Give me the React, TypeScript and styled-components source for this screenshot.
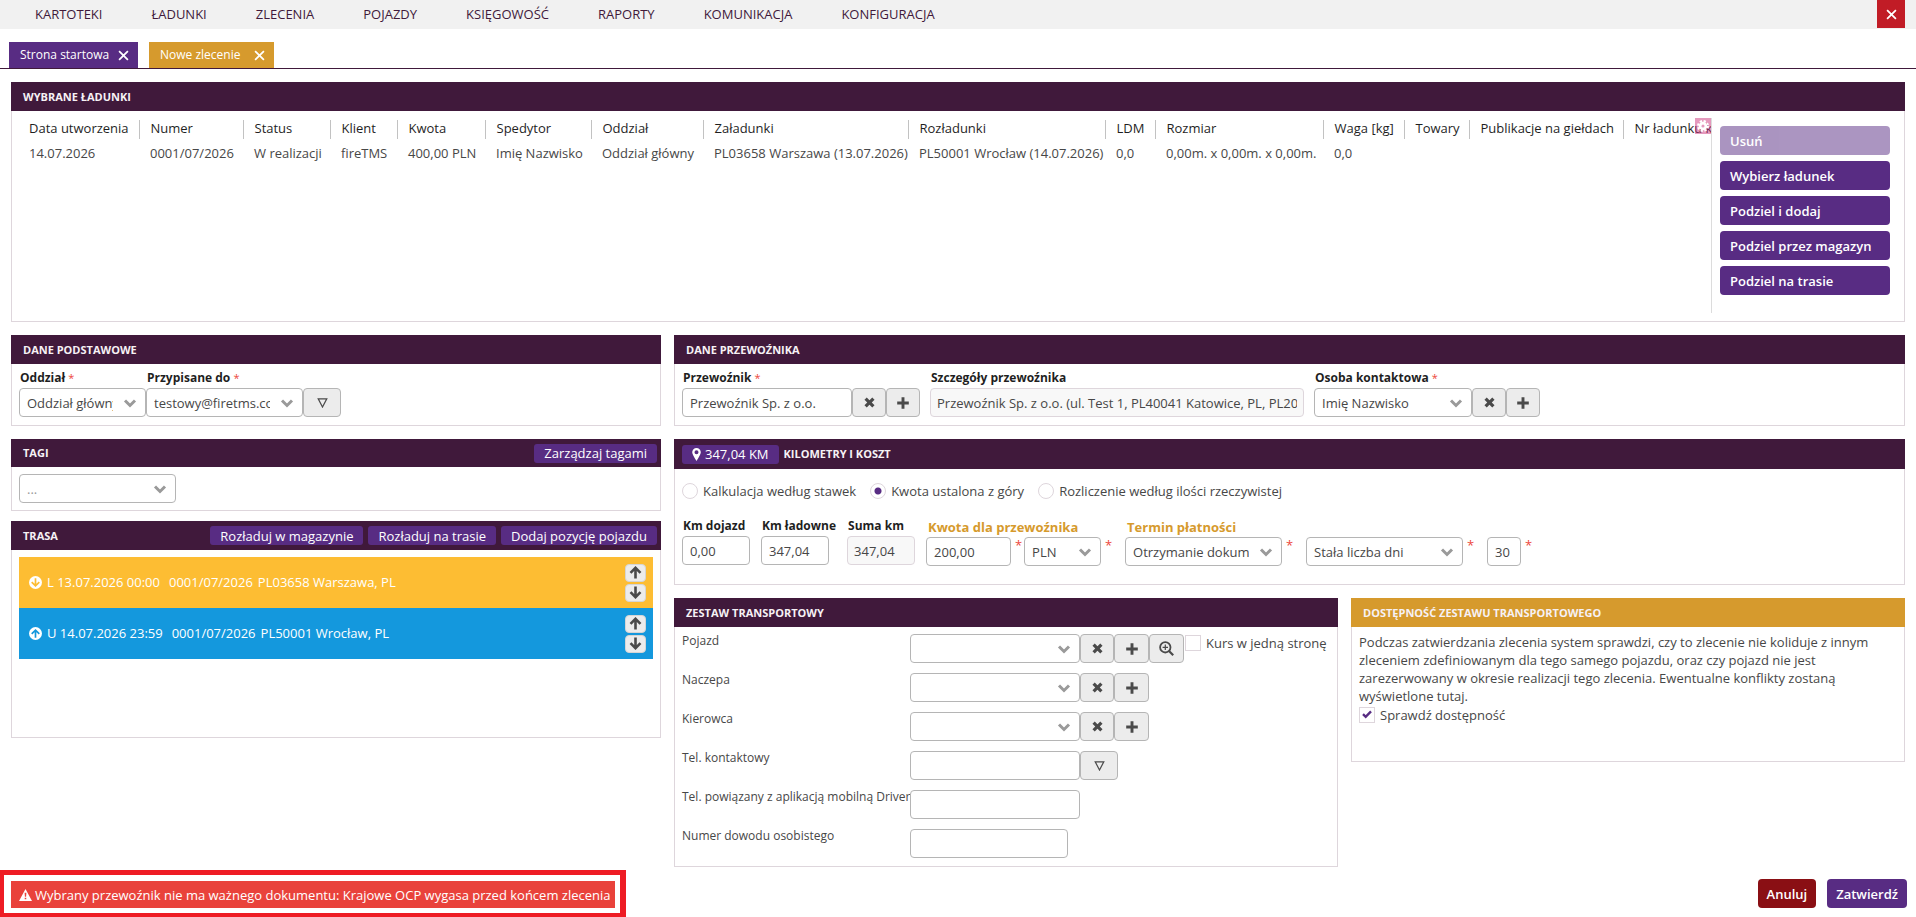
import React, { useId } from "react";
import styled, { createGlobalStyle, css } from "styled-components";

const color = {
  plum: "#40193b",
  violet: "#582c83",
  gold: "#d69a2d",
  line: "#ded6dc",
  inputLine: "#b5b5b5",
  text: "#474747",
  dark: "#1f1f1f",
  required: "#ed473b",
};

const GlobalStyle = createGlobalStyle`
  *, *::before, *::after { box-sizing: border-box; }
  body { margin: 0; background: #fff; }
  body, button, input, select {
    font-family: "Open Sans", "Noto Sans", sans-serif;
    font-size: 13px;
    line-height: 18px;
    color: ${color.text};
  }
  button { cursor: pointer; }
`;

/* ---------- top bars ---------- */

const Nav = styled.nav`
  display: flex;
  justify-content: space-between;
  height: 29px;
  padding: 0 11px 0 10px;
  background: #f1f1f1;
`;

const NavLinks = styled.div`
  display: flex;
`;

const NavLink = styled.a`
  padding: 0 24px 0 25px;
  line-height: 29px;
  color: ${color.plum};
  text-decoration: none;
`;

const CloseButton = styled.button`
  display: flex;
  align-items: center;
  justify-content: center;
  width: 28px;
  height: 28px;
  padding: 0;
  border: 0;
  background: #c11c26;
`;

const Tabs = styled.div`
  display: flex;
  gap: 11px;
  margin-top: 13px;
  padding: 0 9px;
  border-bottom: 1px solid ${color.plum};
`;

const Tab = styled.div<{ $width: number; $active?: boolean }>`
  display: flex;
  align-items: center;
  justify-content: space-between;
  width: ${(p) => p.$width}px;
  height: 26px;
  padding: 0 9px 0 11px;
  background: ${(p) => (p.$active ? color.gold : color.violet)};
  color: #fff;
  font-size: 12px;
  white-space: nowrap;
`;

const TabClose = styled.button`
  display: flex;
  padding: 0;
  border: 0;
  background: none;
`;

/* ---------- panels ---------- */

const Page = styled.main`
  padding: 13px 11px 0;
`;

const Panel = styled.section`
  display: flex;
  flex-direction: column;
  min-width: 0;
`;

const PanelHeader = styled.header<{ $gold?: boolean; $height?: number }>`
  display: flex;
  align-items: center;
  gap: 5px;
  height: ${(p) => p.$height ?? 29}px;
  padding: 0 4px 0 12px;
  background: ${(p) => (p.$gold ? color.gold : color.plum)};
`;

const PanelTitle = styled.h2`
  flex: 1;
  margin: 0;
  color: #f6f1f5;
  font-size: 11px;
  line-height: 16px;
  font-weight: 700;
`;

const PanelBody = styled.div<{ $minHeight?: number; $pad?: string }>`
  min-height: ${(p) => p.$minHeight ?? 0}px;
  padding: ${(p) => p.$pad ?? "4px 7px 8px"};
  border: 1px solid ${color.line};
  border-top: 0;
`;

const SmallButton = styled.button`
  height: 19px;
  padding: 0 10px;
  border: 0;
  border-radius: 3px;
  background: ${color.violet};
  color: #fff;
  line-height: 18px;
`;

const DistanceBadge = styled(SmallButton)`
  display: flex;
  align-items: center;
  gap: 4px;
`;

const Button = styled.button<{ $danger?: boolean; $pad?: number }>`
  height: 29px;
  padding: 0 ${(p) => p.$pad ?? 10}px;
  border: 0;
  border-radius: 4px;
  background: ${(p) => (p.$danger ? "#8a0f14" : color.violet)};
  color: #fff;
  font-weight: 600;
  text-align: left;

  &:disabled {
    opacity: 0.5;
  }
`;

/* ---------- loads table ---------- */

const LoadsBody = styled.div`
  display: flex;
  gap: 8px;
  height: 211px;
  padding: 7px 14px 8px 6px;
  border: 1px solid ${color.line};
  border-top: 0;
`;

const TableArea = styled.div`
  position: relative;
  flex: 1;
  min-width: 0;
  overflow: hidden;
  border-right: 1px solid #dcdcdc;
`;

const Table = styled.table`
  width: 1710px;
  margin-top: 2px;
  border-collapse: collapse;
  table-layout: fixed;
`;

const HeadCell = styled.th<{ $last?: boolean }>`
  height: 19px;
  padding: 0 0 2px 11px;
  border-right: ${(p) => (p.$last ? "0" : "1px solid #c2c2c2")};
  color: ${color.dark};
  font-weight: 400;
  line-height: 17px;
  text-align: left;
  white-space: nowrap;
`;

const Cell = styled.td`
  height: 29px;
  padding: 0 0 2px 11px;
  white-space: nowrap;
`;

const GearButton = styled.button`
  position: absolute;
  top: 0;
  right: 0;
  display: flex;
  align-items: center;
  justify-content: center;
  width: 16px;
  height: 16px;
  padding: 0;
  border: 0;
  background: rgba(204, 51, 123, 0.5);
`;

const SideButtons = styled.div`
  display: flex;
  flex-direction: column;
  gap: 6px;
  width: 170px;
  padding-top: 8px;
`;

/* ---------- page grid ---------- */

const Columns = styled.div`
  display: grid;
  grid-template-columns: 650fr 1231fr;
  gap: 13px;
  align-items: start;
  margin-top: 13px;
`;

const Column = styled.div<{ $gap: number }>`
  display: flex;
  flex-direction: column;
  gap: ${(p) => p.$gap}px;
  min-width: 0;
`;

const SplitRow = styled.div`
  display: grid;
  grid-template-columns: 664fr 554fr;
  gap: 13px;
  align-items: start;
`;

/* ---------- form parts ---------- */

const FieldRow = styled.div<{ $gap?: number }>`
  display: flex;
  align-items: flex-start;
  gap: ${(p) => p.$gap ?? 0}px;
`;

const Field = styled.div`
  display: flex;
  flex-direction: column;
`;

const FieldLabel = styled.label<{ $gold?: boolean }>`
  margin-bottom: 1px;
  padding: ${(p) => (p.$gold ? "2px 0 0 2px" : "1px 0 0 1px")};
  color: ${(p) => (p.$gold ? color.gold : color.dark)};
  font-size: ${(p) => (p.$gold ? 13 : 12)}px;
  font-weight: 700;
  white-space: nowrap;
`;

const Star = styled.span`
  color: ${color.required};
  font-size: 11px;
  font-weight: 400;
`;

const StarColumn = styled.span`
  width: 13px;
  padding-left: 4px;
  color: ${color.required};
  line-height: 16px;
`;

const control = css<{ $width: number }>`
  width: ${(p) => p.$width}px;
  height: 29px;
  margin: 0;
  border: 1px solid ${color.inputLine};
  border-radius: 4px;
  background: #fff;
  color: ${color.text};
  outline: 0;
`;

const Input = styled.input<{ $width: number }>`
  ${control}
  padding: 0 7px;

  &:read-only {
    padding: 0 6px;
    border-color: ${color.line};
    background: #f8f8f8;
  }
`;

const SelectWrap = styled.span`
  position: relative;
  display: flex;
  width: fit-content;
`;

const NativeSelect = styled.select<{ $width: number; $muted?: boolean }>`
  ${control}
  padding: 0 32px 0 7px;
  appearance: none;
  ${(p) => p.$muted && "color: #9a9a9a;"}
`;

const ChevronSvg = styled.svg`
  position: absolute;
  top: 10px;
  right: 9px;
  pointer-events: none;
`;

const IconButton = styled.button<{ $width?: number }>`
  display: flex;
  align-items: center;
  justify-content: center;
  width: ${(p) => p.$width ?? 34}px;
  height: 29px;
  padding: 0;
  border: 1px solid ${color.inputLine};
  border-radius: 4px;
  background: #ececec;
`;

function Chevron() {
  return (
    <ChevronSvg width="14" height="11" viewBox="0 0 14 11">
      <path d="M2 2.5 L7 7.5 L12 2.5" fill="none" stroke="#9a9a9a" strokeWidth="3" />
    </ChevronSvg>
  );
}

type SelectProps = { id: string; width: number; value: string; label?: string; muted?: boolean };

function Select({ id, width, value, label, muted }: SelectProps) {
  return (
    <SelectWrap>
      <NativeSelect id={id} $width={width} $muted={muted} defaultValue={value} aria-label={label}>
        <option>{value}</option>
      </NativeSelect>
      <Chevron />
    </SelectWrap>
  );
}

function ClearButton() {
  return (
    <IconButton aria-label="Wyczyść">
      <svg width="11" height="11" viewBox="0 0 11 11">
        <path d="M1.6 1.6 L9.4 9.4 M9.4 1.6 L1.6 9.4" stroke="#4a4a4a" strokeWidth="3.2" />
      </svg>
    </IconButton>
  );
}

function AddButton({ width }: { width?: number }) {
  return (
    <IconButton $width={width} aria-label="Dodaj">
      <svg width="12" height="12" viewBox="0 0 12 12">
        <path d="M6 0.2 V11.8 M0.2 6 H11.8" stroke="#4a4a4a" strokeWidth="2.9" />
      </svg>
    </IconButton>
  );
}

function FilterButton() {
  return (
    <IconButton $width={38} aria-label="Rozwiń">
      <svg width="11" height="10" viewBox="0 0 11 10">
        <path d="M1.2 0.8 H9.8 L5.5 9 Z" fill="none" stroke="#4a4a4a" strokeWidth="1.2" />
      </svg>
    </IconButton>
  );
}

function CrossIcon({ size }: { size: number }) {
  return (
    <svg width={size} height={size} viewBox="0 0 10 10">
      <path d="M1 1 L9 9 M9 1 L1 9" stroke="#fff" strokeWidth="1.6" />
    </svg>
  );
}

/* ---------- radios and tick boxes ---------- */

const Choice = styled.label`
  display: flex;
  align-items: center;
  gap: 5px;
  white-space: nowrap;
`;

const Radio = styled.input`
  width: 16px;
  height: 16px;
  margin: 0;
  appearance: none;
  border: 1px solid ${color.line};
  border-radius: 50%;
  background: #fff;

  &:checked {
    background: radial-gradient(circle, ${color.violet} 3px, #fff 4px);
  }
`;

const CheckWrap = styled.span`
  position: relative;
  display: flex;

  svg {
    position: absolute;
    top: 3px;
    left: 3px;
    pointer-events: none;
  }
`;

const Checkbox = styled.input`
  width: 16px;
  height: 16px;
  margin: 0;
  appearance: none;
  border: 1px solid ${color.line};
  background: #fff;
`;

const RadioRow = styled.div`
  display: flex;
  gap: 14px;
  margin-bottom: 16px;
`;

/* ---------- route ---------- */

const Stop = styled.div<{ $load?: boolean }>`
  display: flex;
  align-items: center;
  gap: 5px;
  height: 51px;
  padding: 0 7px 0 10px;
  background: ${(p) => (p.$load ? "#fdbd33" : "#1498dd")};
  color: #fff;
`;

const StopText = styled.span`
  display: flex;
  flex: 1;
  gap: 9px;
  padding-bottom: 2px;
  white-space: nowrap;
`;

const StopOrder = styled.span`
  display: flex;
  gap: 5px;
`;

const StopButtons = styled.span`
  display: flex;
  flex-direction: column;
  gap: 2px;
`;

const MoveButton = styled.button`
  display: flex;
  align-items: center;
  justify-content: center;
  width: 21px;
  height: 18px;
  padding: 0;
  border: 1px solid #d5d5d5;
  border-radius: 4px;
  background: #ececec;
`;

function Arrow({ down }: { down?: boolean }) {
  return (
    <svg width="13" height="13" viewBox="0 0 13 13">
      <path
        d={down ? "M6.5 0.5 V10.5 M1.5 6.2 L6.5 11.2 L11.5 6.2" : "M6.5 12.5 V2.5 M1.5 6.8 L6.5 1.8 L11.5 6.8"}
        fill="none"
        stroke="#4a4a4a"
        strokeWidth="2.6"
      />
    </svg>
  );
}

function CircleArrow({ down, fill }: { down?: boolean; fill: string }) {
  return (
    <svg width="13" height="13" viewBox="0 0 13 13">
      <circle cx="6.5" cy="6.5" r="6.5" fill="#fff" />
      <path
        d={down ? "M6.5 2.2 V9.6 M2.7 6.1 L6.5 9.8 L10.3 6.1" : "M6.5 10.8 V3.4 M2.7 6.9 L6.5 3.2 L10.3 6.9"}
        fill="none"
        stroke={fill}
        strokeWidth="1.7"
      />
    </svg>
  );
}

/* ---------- transport set ---------- */

const SetRows = styled.div`
  display: flex;
  flex-direction: column;
  gap: 10px;
`;

const SetRow = styled.div`
  display: flex;
  height: 29px;
`;

const SetLabel = styled.label`
  flex: 0 0 228px;
  font-size: 12px;
  line-height: 14px;
  white-space: nowrap;
`;

const OneWay = styled(Choice)`
  height: 18px;
  padding-left: 1px;
`;

const Note = styled.p`
  margin: 0 0 1px;
`;

/* ---------- footer ---------- */

const Footer = styled.footer`
  display: flex;
  align-items: flex-start;
  justify-content: space-between;
  margin-top: 3px;
  padding-right: 9px;
`;

const AlertFrame = styled.div`
  padding: 6px 5px 5px 7px;
  border: 4px solid #ee1c24;
  border-width: 5px 6px 4px 4px;
`;

const Alert = styled.div`
  display: flex;
  align-items: center;
  gap: 3px;
  height: 27px;
  padding: 0 4px 0 8px;
  background: #e9423b;
  color: #fff;
  white-space: nowrap;
`;

const FooterButtons = styled.div`
  display: flex;
  gap: 11px;
  padding-top: 9px;
`;

/* ---------- data ---------- */

const menu = ["KARTOTEKI", "ŁADUNKI", "ZLECENIA", "POJAZDY", "KSIĘGOWOŚĆ", "RAPORTY", "KOMUNIKACJA", "KONFIGURACJA"];

const loadColumns: [string, number, string][] = [
  ["Data utworzenia", 121, "14.07.2026"],
  ["Numer", 104, "0001/07/2026"],
  ["Status", 87, "W realizacji"],
  ["Klient", 67, "fireTMS"],
  ["Kwota", 88, "400,00 PLN"],
  ["Spedytor", 106, "Imię Nazwisko"],
  ["Oddział", 112, "Oddział główny"],
  ["Załadunki", 205, "PL03658 Warszawa (13.07.2026)"],
  ["Rozładunki", 197, "PL50001 Wrocław (14.07.2026)"],
  ["LDM", 50, "0,0"],
  ["Rozmiar", 168, "0,00m. x 0,00m. x 0,00m."],
  ["Waga [kg]", 81, "0,0"],
  ["Towary", 65, ""],
  ["Publikacje na giełdach", 154, ""],
  ["Nr ładunku klienta", 105, ""],
];

const sideActions = ["Usuń", "Wybierz ładunek", "Podziel i dodaj", "Podziel przez magazyn", "Podziel na trasie"];

function LoadsPanel() {
  return (
    <Panel>
      <PanelHeader>
        <PanelTitle>WYBRANE ŁADUNKI</PanelTitle>
      </PanelHeader>
      <LoadsBody>
        <TableArea>
          <Table>
            <colgroup>
              {loadColumns.map(([name, width]) => (
                <col key={name} width={width} />
              ))}
            </colgroup>
            <thead>
              <tr>
                {loadColumns.map(([name], i) => (
                  <HeadCell key={name} $last={i === loadColumns.length - 1}>
                    {name}
                  </HeadCell>
                ))}
              </tr>
            </thead>
            <tbody>
              <tr>
                {loadColumns.map(([name, , value]) => (
                  <Cell key={name}>{value}</Cell>
                ))}
              </tr>
            </tbody>
          </Table>
          <GearButton aria-label="Ustawienia kolumn">
            <svg width="12" height="12" viewBox="0 0 12 12">
              <circle cx="6" cy="6" r="2.9" fill="none" stroke="#fff" strokeWidth="2.8" />
              <circle cx="6" cy="6" r="5" fill="none" stroke="#fff" strokeWidth="2" strokeDasharray="2.3 1.63" />
            </svg>
          </GearButton>
        </TableArea>
        <SideButtons>
          {sideActions.map((name, i) => (
            <Button key={name} disabled={i === 0}>
              {name}
            </Button>
          ))}
        </SideButtons>
      </LoadsBody>
    </Panel>
  );
}

function BasicPanel() {
  const id = useId();
  return (
    <Panel>
      <PanelHeader>
        <PanelTitle>DANE PODSTAWOWE</PanelTitle>
      </PanelHeader>
      <PanelBody>
        <FieldRow>
          <Field>
            <FieldLabel htmlFor={id + "a"}>
              Oddział <Star>*</Star>
            </FieldLabel>
            <Select id={id + "a"} width={127} value="Oddział główny" />
          </Field>
          <Field>
            <FieldLabel htmlFor={id + "b"}>
              Przypisane do <Star>*</Star>
            </FieldLabel>
            <FieldRow>
              <Select id={id + "b"} width={157} value="testowy@firetms.com" />
              <FilterButton />
            </FieldRow>
          </Field>
        </FieldRow>
      </PanelBody>
    </Panel>
  );
}

function TagsPanel() {
  return (
    <Panel>
      <PanelHeader $height={28}>
        <PanelTitle>TAGI</PanelTitle>
        <SmallButton>Zarządzaj tagami</SmallButton>
      </PanelHeader>
      <PanelBody $pad="7px">
        <Select id="tagi" label="Tagi" width={157} value="..." muted />
      </PanelBody>
    </Panel>
  );
}

type RouteStopProps = { load?: boolean; when: string; order: string; place: string };

function RouteStop({ load, when, order, place }: RouteStopProps) {
  return (
    <Stop $load={load}>
      <CircleArrow down={load} fill={load ? "#fdbd33" : "#1498dd"} />
      <StopText>
        <span>{when}</span>
        <StopOrder>
          <span>{order}</span>
          <span>{place}</span>
        </StopOrder>
      </StopText>
      <StopButtons>
        <MoveButton aria-label="W górę">
          <Arrow />
        </MoveButton>
        <MoveButton aria-label="W dół">
          <Arrow down />
        </MoveButton>
      </StopButtons>
    </Stop>
  );
}

function RoutePanel() {
  return (
    <Panel>
      <PanelHeader>
        <PanelTitle>TRASA</PanelTitle>
        <SmallButton>Rozładuj w magazynie</SmallButton>
        <SmallButton>Rozładuj na trasie</SmallButton>
        <SmallButton>Dodaj pozycję pojazdu</SmallButton>
      </PanelHeader>
      <PanelBody $minHeight={188} $pad="7px">
        <RouteStop load when="L 13.07.2026 00:00" order="0001/07/2026" place="PL03658 Warszawa, PL" />
        <RouteStop when="U 14.07.2026 23:59" order="0001/07/2026" place="PL50001 Wrocław, PL" />
      </PanelBody>
    </Panel>
  );
}

function CarrierPanel() {
  const id = useId();
  return (
    <Panel>
      <PanelHeader>
        <PanelTitle>DANE PRZEWOŹNIKA</PanelTitle>
      </PanelHeader>
      <PanelBody>
        <FieldRow $gap={10}>
          <Field>
            <FieldLabel htmlFor={id + "a"}>
              Przewoźnik <Star>*</Star>
            </FieldLabel>
            <FieldRow>
              <Input id={id + "a"} $width={170} defaultValue="Przewoźnik Sp. z o.o." />
              <ClearButton />
              <AddButton />
            </FieldRow>
          </Field>
          <Field>
            <FieldLabel htmlFor={id + "b"}>Szczegóły przewoźnika</FieldLabel>
            <Input
              id={id + "b"}
              $width={374}
              readOnly
              defaultValue="Przewoźnik Sp. z o.o. (ul. Test 1, PL40041 Katowice, PL, PL20"
            />
          </Field>
          <Field>
            <FieldLabel htmlFor={id + "c"}>
              Osoba kontaktowa <Star>*</Star>
            </FieldLabel>
            <FieldRow>
              <Select id={id + "c"} width={158} value="Imię Nazwisko" />
              <ClearButton />
              <AddButton />
            </FieldRow>
          </Field>
        </FieldRow>
      </PanelBody>
    </Panel>
  );
}

const CostHeader = styled(PanelHeader)`
  padding-left: 8px;
`;

function CostPanel() {
  const id = useId();
  return (
    <Panel>
      <CostHeader $height={30}>
        <DistanceBadge>
          <svg width="9" height="13" viewBox="0 0 9 13">
            <path
              fillRule="evenodd"
              fill="#fff"
              d="M4.5 0 A4.3 4.3 0 0 1 8.8 4.3 C8.8 6 7 9 4.5 13 C2 9 0.2 6 0.2 4.3 A4.3 4.3 0 0 1 4.5 0 Z M4.5 2.3 A2 2 0 1 0 4.5 6.3 A2 2 0 1 0 4.5 2.3 Z"
            />
          </svg>
          347,04 KM
        </DistanceBadge>
        <PanelTitle>KILOMETRY I KOSZT</PanelTitle>
      </CostHeader>
      <PanelBody $minHeight={116} $pad="13px 7px 8px">
        <RadioRow>
          <Choice>
            <Radio type="radio" name="koszt" /> Kalkulacja według stawek
          </Choice>
          <Choice>
            <Radio type="radio" name="koszt" defaultChecked /> Kwota ustalona z góry
          </Choice>
          <Choice>
            <Radio type="radio" name="koszt" /> Rozliczenie według ilości rzeczywistej
          </Choice>
        </RadioRow>
        <FieldRow $gap={11}>
          <Field>
            <FieldLabel htmlFor={id + "a"}>Km dojazd</FieldLabel>
            <Input id={id + "a"} $width={68} defaultValue="0,00" />
          </Field>
          <Field>
            <FieldLabel htmlFor={id + "b"}>Km ładowne</FieldLabel>
            <Input id={id + "b"} $width={68} defaultValue="347,04" />
          </Field>
          <Field>
            <FieldLabel htmlFor={id + "c"}>Suma km</FieldLabel>
            <Input id={id + "c"} $width={68} readOnly defaultValue="347,04" />
          </Field>
          <Field>
            <FieldLabel $gold htmlFor={id + "d"}>
              Kwota dla przewoźnika
            </FieldLabel>
            <FieldRow>
              <Input id={id + "d"} $width={85} defaultValue="200,00" />
              <StarColumn>*</StarColumn>
              <Select id="waluta" label="Waluta" width={77} value="PLN" />
              <StarColumn>*</StarColumn>
            </FieldRow>
          </Field>
          <Field>
            <FieldLabel $gold htmlFor={id + "e"}>
              Termin płatności
            </FieldLabel>
            <FieldRow $gap={11}>
              <FieldRow>
                <Select id={id + "e"} width={157} value="Otrzymanie dokumentów" />
                <StarColumn>*</StarColumn>
              </FieldRow>
              <FieldRow>
                <Select id="liczba-dni" label="Sposób liczenia dni" width={157} value="Stała liczba dni" />
                <StarColumn>*</StarColumn>
              </FieldRow>
              <FieldRow>
                <Input $width={34} defaultValue="30" aria-label="Dni" />
                <StarColumn>*</StarColumn>
              </FieldRow>
            </FieldRow>
          </Field>
        </FieldRow>
      </PanelBody>
    </Panel>
  );
}

function TransportPanel() {
  const id = useId();
  return (
    <Panel>
      <PanelHeader>
        <PanelTitle>ZESTAW TRANSPORTOWY</PanelTitle>
      </PanelHeader>
      <PanelBody $pad="7px 7px 8px">
        <SetRows>
          <SetRow>
            <SetLabel htmlFor={id + "a"}>Pojazd</SetLabel>
            <Select id={id + "a"} width={170} value="" />
            <ClearButton />
            <AddButton width={35} />
            <IconButton $width={35} aria-label="Szukaj">
              <svg width="15" height="15" viewBox="0 0 15 15">
                <circle cx="6.3" cy="6.3" r="5.2" fill="none" stroke="#4a4a4a" strokeWidth="1.8" />
                <path d="M10 10 L14.2 14.2" stroke="#4a4a4a" strokeWidth="2.2" />
                <path d="M6.3 3.6 V9 M3.6 6.3 H9" stroke="#4a4a4a" strokeWidth="1.2" />
              </svg>
            </IconButton>
            <OneWay>
              <Checkbox type="checkbox" /> Kurs w jedną stronę
            </OneWay>
          </SetRow>
          {["Naczepa", "Kierowca"].map((name) => (
            <SetRow key={name}>
              <SetLabel htmlFor={id + name}>{name}</SetLabel>
              <Select id={id + name} width={170} value="" />
              <ClearButton />
              <AddButton width={35} />
            </SetRow>
          ))}
          <SetRow>
            <SetLabel htmlFor={id + "d"}>Tel. kontaktowy</SetLabel>
            <Input id={id + "d"} $width={170} />
            <FilterButton />
          </SetRow>
          <SetRow>
            <SetLabel htmlFor={id + "e"}>Tel. powiązany z aplikacją mobilną Driver</SetLabel>
            <Input id={id + "e"} $width={170} />
          </SetRow>
          <SetRow>
            <SetLabel htmlFor={id + "f"}>Numer dowodu osobistego</SetLabel>
            <Input id={id + "f"} $width={158} />
          </SetRow>
        </SetRows>
      </PanelBody>
    </Panel>
  );
}

function AvailabilityPanel() {
  return (
    <Panel>
      <PanelHeader $gold>
        <PanelTitle>DOSTĘPNOŚĆ ZESTAWU TRANSPORTOWEGO</PanelTitle>
      </PanelHeader>
      <PanelBody $minHeight={135} $pad="6px 7px">
        <Note>
          Podczas zatwierdzania zlecenia system sprawdzi, czy to zlecenie nie koliduje z innym zleceniem zdefiniowanym
          dla tego samego pojazdu, oraz czy pojazd nie jest zarezerwowany w okresie realizacji tego zlecenia. Ewentualne
          konflikty zostaną wyświetlone tutaj.
        </Note>
        <Choice>
          <CheckWrap>
            <Checkbox type="checkbox" defaultChecked />
            <svg width="10" height="9" viewBox="0 0 10 9">
              <path d="M1 4.2 L3.7 6.8 L9 1.4" fill="none" stroke={color.violet} strokeWidth="2.4" />
            </svg>
          </CheckWrap>
          Sprawdź dostępność
        </Choice>
      </PanelBody>
    </Panel>
  );
}

export default function App() {
  return (
    <>
      <GlobalStyle />
      <Nav>
        <NavLinks>
          {menu.map((name) => (
            <NavLink key={name} href="#">
              {name}
            </NavLink>
          ))}
        </NavLinks>
        <CloseButton aria-label="Zamknij">
          <CrossIcon size={11} />
        </CloseButton>
      </Nav>
      <Tabs>
        <Tab $width={129}>
          Strona startowa
          <TabClose aria-label="Zamknij kartę">
            <CrossIcon size={11} />
          </TabClose>
        </Tab>
        <Tab $width={125} $active>
          Nowe zlecenie
          <TabClose aria-label="Zamknij kartę">
            <CrossIcon size={11} />
          </TabClose>
        </Tab>
      </Tabs>
      <Page>
        <LoadsPanel />
        <Columns>
          <Column $gap={13}>
            <BasicPanel />
            <Column $gap={10}>
              <TagsPanel />
              <RoutePanel />
            </Column>
          </Column>
          <Column $gap={13}>
            <CarrierPanel />
            <CostPanel />
            <SplitRow>
              <TransportPanel />
              <AvailabilityPanel />
            </SplitRow>
          </Column>
        </Columns>
      </Page>
      <Footer>
        <AlertFrame role="alert">
          <Alert>
            <svg width="13" height="12" viewBox="0 0 13 12">
              <path
                fillRule="evenodd"
                fill="#fff"
                d="M6.5 0 L13 12 H0 Z M5.6 3.8 L5.9 7.8 H7.1 L7.4 3.8 Z M5.7 8.7 V10.2 H7.3 V8.7 Z"
              />
            </svg>
            Wybrany przewoźnik nie ma ważnego dokumentu: Krajowe OCP wygasa przed końcem zlecenia
          </Alert>
        </AlertFrame>
        <FooterButtons>
          <Button $danger $pad={9}>
            Anuluj
          </Button>
          <Button $pad={9}>Zatwierdź</Button>
        </FooterButtons>
      </Footer>
    </>
  );
}
